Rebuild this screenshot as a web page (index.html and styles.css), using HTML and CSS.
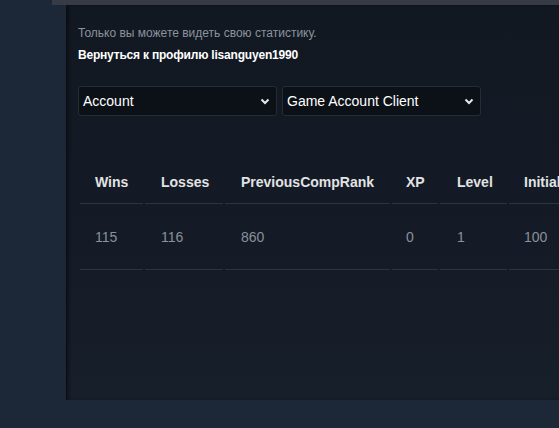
FILE: index.html
```html
<!DOCTYPE html>
<html lang="ru">
<head>
<meta charset="utf-8">
<title>Статистика</title>
<link rel="stylesheet" href="styles.css">
</head>
<body>
<div class="page">
  <div class="topbar"></div>
  <div class="panel">
    <p class="note">Только вы можете видеть свою статистику.</p>
    <a class="back" href="#">Вернуться к профилю lisanguyen1990</a>
    <div class="filters">
      <div class="select">
        <span>Account</span>
        <svg class="chev" width="10" height="7" viewBox="0 0 10 7"><path d="M1.5 1.5 L5 5 L8.5 1.5" fill="none" stroke="#e8e8e8" stroke-width="2"/></svg>
      </div>
      <div class="select">
        <span>Game Account Client</span>
        <svg class="chev" width="10" height="7" viewBox="0 0 10 7"><path d="M1.5 1.5 L5 5 L8.5 1.5" fill="none" stroke="#e8e8e8" stroke-width="2"/></svg>
      </div>
    </div>
    <table class="stats">
      <thead>
        <tr>
          <th class="c1">Wins</th>
          <th class="c2">Losses</th>
          <th class="c3">PreviousCompRank</th>
          <th class="c4">XP</th>
          <th class="c5">Level</th>
          <th class="c6">InitialRank</th>
        </tr>
      </thead>
      <tbody>
        <tr>
          <td>115</td>
          <td>116</td>
          <td>860</td>
          <td>0</td>
          <td>1</td>
          <td>100</td>
        </tr>
      </tbody>
    </table>
  </div>
</div>
</body>
</html>
```

FILE: styles.css
```css
html, body {
  margin: 0;
  padding: 0;
  background: #1c2737;
  overflow: hidden;
  height: 100%;
}

.page {
  width: 559px;
  height: 428px;
  overflow: hidden;
  font-family: "Liberation Sans", Arial, sans-serif;
}

.topbar {
  margin-left: 52px;
  width: 620px;
  height: 5px;
  background: #373b46;
}

.panel {
  margin-left: 66px;
  width: 600px;
  height: 395px;
  box-sizing: border-box;
  padding: 20px 0 0 11px;
  background: linear-gradient(to bottom, #121822 0%, #141b26 60%, #171f2b 100%);
  border-left: 1px solid #0a0e14;
  box-shadow: inset 2px 0 3px rgba(0, 0, 0, 0.35);
}

.note {
  margin: 0;
  font-size: 12px;
  line-height: 16px;
  color: #8b939b;
}

.back {
  display: block;
  margin-top: 6px;
  font-size: 12px;
  line-height: 16px;
  font-weight: bold;
  color: #ffffff;
  text-decoration: none;
  letter-spacing: -0.2px;
}

.filters {
  display: flex;
  gap: 5px;
  margin-top: 23px;
}

.select {
  width: 199px;
  height: 30px;
  box-sizing: border-box;
  display: flex;
  align-items: center;
  justify-content: space-between;
  padding: 0 6px 0 4px;
  background: #0c1118;
  border: 1px solid #262c35;
  border-radius: 3px;
  color: #ffffff;
  font-size: 14px;
}

.chev {
  display: block;
}

.stats {
  margin-top: 44px;
  border-collapse: separate;
  border-spacing: 2px 0;
  font-size: 14px;
  white-space: nowrap;
}

.stats th {
  text-align: left;
  font-weight: bold;
  color: #e2e3e4;
  height: 44px;
  padding: 0 0 0 15px;
  box-sizing: border-box;
  border-bottom: 1px solid #2b3541;
  vertical-align: middle;
}

.stats td {
  text-align: left;
  color: #8a9199;
  height: 66px;
  padding: 0 0 0 15px;
  box-sizing: border-box;
  border-bottom: 1px solid #2b3541;
  vertical-align: middle;
}

.c1 { width: 63px; }
.c2 { width: 78px; padding-left: 16px !important; }
.c3 { width: 165px; padding-left: 16px !important; }
.c4 { width: 46px; padding-left: 14px !important; }
.c5 { width: 67px; padding-left: 17px !important; }
.c6 { width: 110px; }

.stats td:nth-child(2), .stats td:nth-child(3) { padding-left: 16px; }
.stats td:nth-child(4) { padding-left: 14px; }
.stats td:nth-child(5) { padding-left: 17px; }
```
